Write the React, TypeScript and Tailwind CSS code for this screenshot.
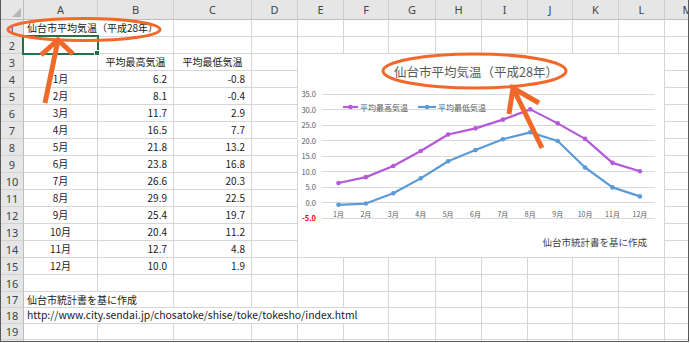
import React from 'react';

const high = [6.2, 8.1, 11.7, 16.5, 21.8, 23.8, 26.6, 29.9, 25.4, 20.4, 12.7, 10.0];
const low = [-0.8, -0.4, 2.9, 7.7, 13.2, 16.8, 20.3, 22.5, 19.7, 11.2, 4.8, 1.9];
const cols = ['A', 'B', 'C', 'D', 'E', 'F', 'G', 'H', 'I', 'J', 'K', 'L', 'M'];
const rows = Array.from({ length: 20 }, (_, i) => i + 1);

type Cell = { t?: string; a?: 'l' | 'c' | 'r'; s?: 1 | 2 | 6; w?: boolean };

function cellsFor(r: number): Cell[] {
  const out: Cell[] = [];
  if (r === 1) out.push({ t: '仙台市平均気温（平成28年）', a: 'l', s: 2 });
  else if (r === 3) out.push({}, { t: '平均最高気温', a: 'c' }, { t: '平均最低気温', a: 'c' });
  else if (r >= 4 && r <= 15) {
    const i = r - 4;
    out.push({ t: `${i + 1}月`, a: 'c' }, { t: high[i].toFixed(1), a: 'r' }, { t: low[i].toFixed(1), a: 'r' });
  } else if (r === 17) out.push({ t: '仙台市統計書を基に作成', a: 'l', s: 2 });
  else if (r === 18)
    out.push({ t: 'http://www.city.sendai.jp/chosatoke/shise/toke/tokesho/index.html', a: 'l', s: 6, w: true });
  let used = out.reduce((n, c) => n + (c.s ?? 1), 0);
  while (used < 13) {
    out.push({});
    used++;
  }
  return out;
}

const FONT = "'Noto Sans CJK JP', 'Noto Sans', sans-serif";
const xs = high.map((_, i) => 338.5 + 27.4 * i);
const yv = (v: number) => 202.3 - 3.108 * v;
const ticks = [35, 30, 25, 20, 15, 10, 5, 0, -5];
const PURPLE = '#B45AD7';
const BLUE = '#5B9BD5';
const ORANGE = '#F0692A';

function Chart() {
  const pts = (d: number[]) => d.map((v, i) => `${xs[i]},${yv(v)}`).join(' ');
  return (
    <div className="absolute left-[298px] top-[54px] w-[366px] h-[203px] bg-white">
      <svg width={366} height={203} viewBox="298 54 366 203" fontFamily={FONT}>
        <text x={476} y={71} textAnchor="middle" dominantBaseline="central" fontSize={12.5} fill="#595959">
          仙台市平均気温（平成28年）
        </text>
        {ticks.map((t) => {
          const y = Math.round(yv(t)) + 0.5;
          return (
            <g key={t}>
              <line x1={322} x2={655} y1={y} y2={y} stroke="#d9d9d9" strokeWidth={1} />
              <text
                x={316}
                y={yv(t)}
                textAnchor="end"
                dominantBaseline="central"
                fontSize={7.5}
                fill={t < 0 ? '#ff0000' : '#595959'}
                fontWeight={t < 0 ? 700 : 400}
              >
                {t.toFixed(1)}
              </text>
            </g>
          );
        })}
        {xs.map((x, i) => (
          <text key={i} x={x} y={214} textAnchor="middle" dominantBaseline="central" fontSize={7} fill="#595959">
            {i + 1}月
          </text>
        ))}
        <polyline points={pts(high)} fill="none" stroke={PURPLE} strokeWidth={2.2} strokeLinejoin="round" />
        <polyline points={pts(low)} fill="none" stroke={BLUE} strokeWidth={2.2} strokeLinejoin="round" />
        {high.map((v, i) => (
          <circle key={'h' + i} cx={xs[i]} cy={yv(v)} r={2.3} fill={PURPLE} />
        ))}
        {low.map((v, i) => (
          <circle key={'l' + i} cx={xs[i]} cy={yv(v)} r={2.3} fill={BLUE} />
        ))}
        <line x1={343} x2={358} y1={107} y2={107} stroke={PURPLE} strokeWidth={2.2} />
        <circle cx={350.5} cy={107} r={2.3} fill={PURPLE} />
        <text x={360} y={107} dominantBaseline="central" fontSize={8} fill="#595959">
          平均最高気温
        </text>
        <line x1={418} x2={436} y1={107} y2={107} stroke={BLUE} strokeWidth={2.2} />
        <circle cx={427} cy={107} r={2.3} fill={BLUE} />
        <text x={438} y={107} dominantBaseline="central" fontSize={8} fill="#595959">
          平均最低気温
        </text>
        <text x={647} y={242} textAnchor="end" dominantBaseline="central" fontSize={9.5} fill="#404040">
          仙台市統計書を基に作成
        </text>
      </svg>
    </div>
  );
}

export default function App() {
  return (
    <div className="relative w-[690px] h-[343px] bg-white overflow-hidden font-['Noto_Sans_CJK_JP','Noto_Sans',sans-serif]">
      <div className="w-[689px] h-[342px] border-l border-r border-b border-[#5a5a5a] overflow-hidden">
        <div className="grid grid-cols-[23px_74px_76px_78px_46px_46px_45px_47px_46px_46px_45px_46px_46px_46px] grid-rows-[20px_repeat(16,17px)_repeat(3,16px)_17px]">
          <div className="flex items-end justify-end bg-[#e6e6e6] border-r border-b border-r-[#bdbdbd] border-b-[#bdbdbd] p-[2px]">
            <svg width={9} height={9} viewBox="0 0 9 9">
              <polygon points="9,0 9,9 0,9" fill="#b7b7b7" />
            </svg>
          </div>
          {cols.map((c) => (
            <div
              key={c}
              className="flex items-center justify-center bg-[#e6e6e6] border-r border-b border-r-[#cfcfcf] border-b-[#bdbdbd] text-[11px] leading-none text-[#444] font-['Noto_Sans',sans-serif]"
            >
              {c}
            </div>
          ))}
          {rows.map((r) => (
            <React.Fragment key={r}>
              <div className="flex items-center justify-center bg-[#e6e6e6] border-r border-b border-r-[#bdbdbd] border-b-[#d0d0d0] text-[11px] leading-none text-[#444] font-['Noto_Sans',sans-serif]">
                {r}
              </div>
              {cellsFor(r).map((c, i) => (
                <div
                  key={i}
                  className={`flex items-center whitespace-nowrap overflow-visible border-r border-b border-[#d6d6d6] leading-none text-[#1a1a1a] ${
                    c.w ? 'text-[10.4px]' : 'text-[10px]'
                  } ${c.s === 2 ? 'col-span-2' : c.s === 6 ? 'col-span-6' : ''} ${
                    c.a === 'c' ? 'justify-center' : c.a === 'r' ? 'justify-end pr-[6px]' : 'justify-start pl-[3px]'
                  }`}
                >
                  {c.t}
                </div>
              ))}
            </React.Fragment>
          ))}
        </div>
      </div>

      <div className="absolute left-[22px] top-[35px] w-[77px] h-[20px] border-2 border-[#217346]" />
      <div className="absolute left-[94px] top-[50px] w-[6px] h-[6px] bg-[#217346] border border-white" />

      <Chart />

      <svg className="absolute left-0 top-0 pointer-events-none" width={690} height={343} viewBox="0 0 690 343">
        <ellipse cx={84} cy={29.5} rx={76} ry={11} fill="none" stroke={ORANGE} strokeWidth={3} />
        <ellipse cx={474.5} cy={71} rx={91.5} ry={17} fill="none" stroke={ORANGE} strokeWidth={3} />
        <line x1={45} y1={103} x2={58} y2={40} stroke={ORANGE} strokeWidth={5} />
        <polyline points="41,55 58,40 73,54" fill="none" stroke={ORANGE} strokeWidth={5} strokeLinejoin="miter" />
        <line x1={542} y1={148} x2={513} y2={88} stroke={ORANGE} strokeWidth={5} />
        <polyline points="509,114 513,88 539,103" fill="none" stroke={ORANGE} strokeWidth={5} strokeLinejoin="miter" />
      </svg>
    </div>
  );
}
